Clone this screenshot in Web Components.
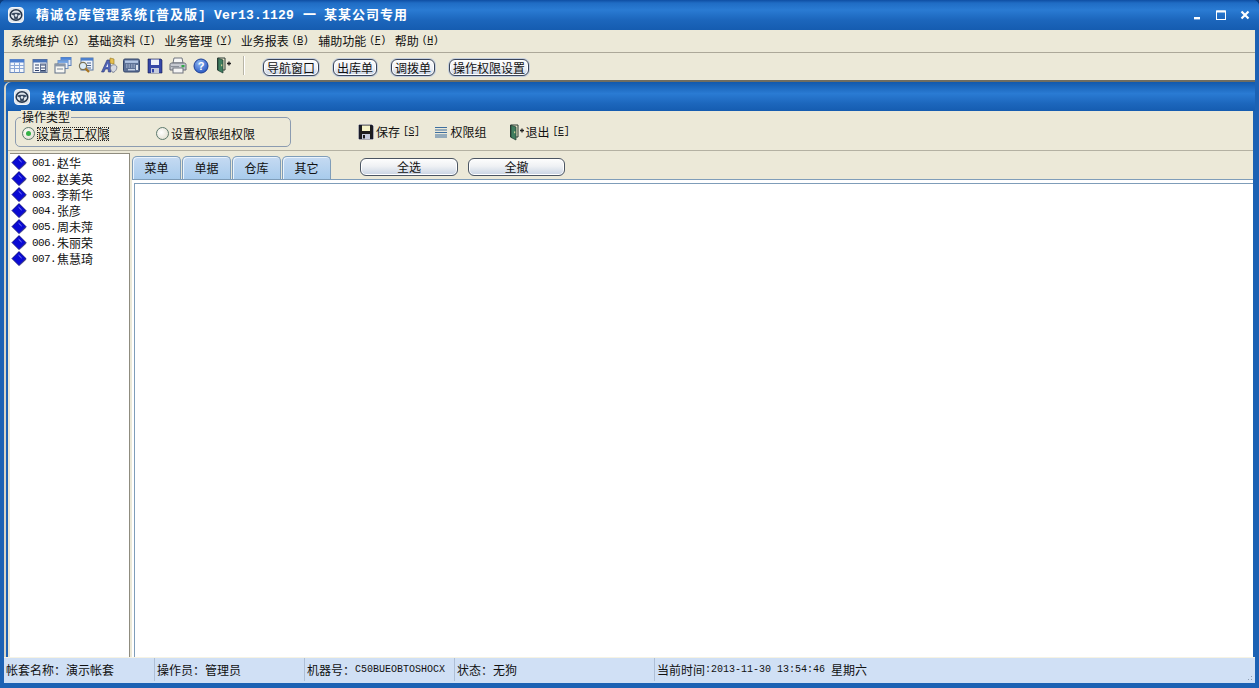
<!DOCTYPE html>
<html>
<head>
<meta charset="utf-8">
<style>
html, body { margin: 0; padding: 0; width: 100%; height: 100%; overflow: hidden; background: #0b3a7a; }
body { font: 12px "Noto Sans CJK SC", "Liberation Sans", sans-serif; color: #111; }
</style>
</head>
<body>
<app-window>
    <title-bar></title-bar>
    <menu-bar></menu-bar>
    <main-toolbar></main-toolbar>
    <inner-window>
        <perm-actions></perm-actions>
        <perm-body></perm-body>
    </inner-window>
    <status-bar></status-bar>
</app-window>

<script>
const MONO = `"Liberation Mono", "DejaVu Sans Mono", monospace`;
const CJK = `"Noto Sans CJK SC", "Liberation Sans", sans-serif`;

const WHEEL = `<svg width="16" height="16" viewBox="0 0 16 16">
<rect x="0.5" y="0.5" width="15" height="15" rx="3.5" fill="#dfe5ec" stroke="#f4f6f9"/>
<ellipse cx="8" cy="8" rx="5.8" ry="5.2" fill="none" stroke="#27364a" stroke-width="1.5"/>
<path d="M2.6 7 C5 5.4 11 5.4 13.4 7 L10.2 8.6 L9.6 12.6 H6.4 L5.8 8.6 Z" fill="#3a4a60"/>
<circle cx="8" cy="8.4" r="1.3" fill="#dfe5ec"/>
</svg>`;

const FLOPPY = `<svg width="16" height="16" viewBox="0 0 16 16">
<path d="M1 1H14L15 2V15H1Z" fill="#24307e" stroke="#10174a" stroke-width="0.6"/>
<rect x="4" y="1.5" width="8" height="5.5" fill="#eef1f8"/>
<rect x="4" y="10" width="8" height="5" fill="#c5cbdc"/>
<rect x="5" y="11" width="2" height="3.4" fill="#24307e"/>
</svg>`;

const DOOR = `<svg width="16" height="17" viewBox="0 0 16 17">
<path d="M1.5 1H9V13H1.5Z" fill="#e8e6c8" stroke="#2b3a34"/>
<path d="M2 1.2L7 3V16L2 13.4Z" fill="#3f7d5f" stroke="#1e3a30" stroke-width="0.7"/>
<rect x="5.2" y="7.4" width="1" height="1.8" fill="#e9e3a0"/>
<path d="M11 6.5H15M13 4.5V8.5" stroke="#222" stroke-width="1.3"/>
</svg>`;

const TOOL_ICONS = [
`<svg width="16" height="16" viewBox="0 0 16 16"><rect x="1" y="1.5" width="14" height="13" fill="#f4f7fc" stroke="#6d8cc0"/><rect x="1" y="1.5" width="14" height="3" fill="#4d7fd0"/><path d="M1 7.5H15M1 10.5H15M5.5 4.5V14.5M10.5 4.5V14.5" stroke="#8aa6d6"/></svg>`,
`<svg width="16" height="16" viewBox="0 0 16 16"><rect x="1" y="1.5" width="14" height="13" fill="#f5f7fb" stroke="#5d6f92"/><rect x="1" y="1.5" width="14" height="3" fill="#4872b8"/><path d="M3 7H7M3 10H7M3 12.5H7M9 7H13M9 10H13M9 12.5H13" stroke="#2f4068"/><rect x="8.5" y="6" width="5" height="7.4" fill="none" stroke="#5d6f92"/></svg>`,
`<svg width="18" height="17" viewBox="0 0 18 17"><rect x="7" y="0.5" width="10" height="8" fill="#dfe9f8" stroke="#5a7fb8"/><rect x="7" y="0.5" width="10" height="2.4" fill="#4d86d8"/><rect x="4" y="3.5" width="10" height="8" fill="#eef3fb" stroke="#6f8fbf"/><rect x="4" y="3.5" width="10" height="2.4" fill="#6fa0e0"/><rect x="1" y="7" width="10" height="9" fill="#f7f7f2" stroke="#5e6f85"/><rect x="1" y="7" width="10" height="2.4" fill="#8a97a8"/><path d="M3 12H9" stroke="#7a8798"/></svg>`,
`<svg width="17" height="17" viewBox="0 0 17 17"><rect x="4" y="1" width="12" height="12" fill="#eef3fa" stroke="#58769f"/><rect x="4" y="1" width="12" height="2.6" fill="#4d80cc"/><path d="M10 6H14M10 8.5H14M10 11H14" stroke="#4a6590"/><circle cx="6" cy="9" r="3.6" fill="#dcecf7" stroke="#7a7256" stroke-width="1.2"/><path d="M8.6 11.6L12 15" stroke="#a8741f" stroke-width="2.2"/></svg>`,
`<svg width="18" height="17" viewBox="0 0 18 17"><path d="M1.5 15L7 3H10L11 15H8.4L8.1 12H5.4L4 15Z" fill="#4f63b4" stroke="#2a3676" stroke-width="0.6"/><path d="M6.2 10H8L7.8 6.4Z" fill="#f0f2fb"/><path d="M10 1L14 2V7L10 6Z" fill="#e7c052" stroke="#94761c" stroke-width="0.6"/><path d="M10.5 10C11.5 7.5 15 7 16.5 9C17.5 11 16 14.5 13 15.5C11.5 14.5 10 12.5 10.5 10Z" fill="#d6d9e2" stroke="#666f86" stroke-width="0.8"/></svg>`,
`<svg width="17" height="15" viewBox="0 0 17 15"><rect x="0.5" y="1" width="16" height="13" rx="1.5" fill="#5d7196" stroke="#35466a"/><rect x="2" y="2.5" width="13" height="2.4" fill="#b3c6e4"/><path d="M3 7H13M3 9H13" stroke="#b9c7de" stroke-dasharray="1.5 1"/><rect x="5" y="11" width="7" height="1.4" fill="#c7d3e6"/><rect x="13" y="7" width="2" height="5" fill="#dfe6f1"/></svg>`,
FLOPPY.replace(/#24307e/g, '#3547a8'),
`<svg width="18" height="17" viewBox="0 0 18 17"><path d="M5 1H13L14 6H4Z" fill="#f7f7f7" stroke="#70757e"/><path d="M1 7.5C1 6.5 2 6 3 6H15C16 6 17 6.5 17 7.5V13H1Z" fill="#c5c8d0" stroke="#666b75"/><rect x="4" y="11" width="10" height="5" fill="#f4f4f4" stroke="#70757e"/><rect x="12.5" y="8" width="3" height="2.2" fill="#2fa846"/><path d="M2 9.5H10" stroke="#8a8f99"/></svg>`,
`<svg width="16" height="16" viewBox="0 0 16 16"><defs><radialGradient id="h" cx="40%" cy="30%" r="80%"><stop offset="0" stop-color="#8fb8f2"/><stop offset="1" stop-color="#1c4dbe"/></radialGradient></defs><circle cx="8" cy="8" r="7" fill="url(#h)" stroke="#1d3f94"/><text x="8" y="12" font-family="Liberation Sans" font-size="11" font-weight="700" text-anchor="middle" fill="#fff">?</text></svg>`,
DOOR
];

const NODE_ICON = `<svg width="16" height="16" viewBox="0 0 16 16">
<path d="M8 15.6L15.6 8.6L14 8Z" fill="#7f7f9c"/>
<path d="M8 0.6L15 7.6L8 14.6L1 7.6Z" fill="#0a0ad4" stroke="#06066e" stroke-width="0.8"/>
<path d="M7.6 4.2L10.6 7" stroke="#8f8fff"/>
</svg>`;

function define(name, html) {
    const tmpl = document.createElement('template');
    tmpl.innerHTML = html;
    customElements.define(name, class extends HTMLElement {
        constructor() {
            super();
            this.attachShadow({ mode: 'open' });
            this.shadowRoot.appendChild(tmpl.content.cloneNode(true));
        }
    });
}

define('app-window', `
<style>
:host { display: flex; flex-direction: column; width: 1259px; height: 688px; box-sizing: border-box;
    padding: 0 4px 5px; border-radius: 6px 6px 0 0;
    background: #1c62b4; }
</style>
<slot></slot>
`);

define('title-bar', `
<style>
:host { display: flex; align-items: center; height: 30px; margin: 0 -4px; padding: 0 4px; flex: none;
    border-radius: 6px 6px 0 0; color: #fff;
    background: linear-gradient(#0f4ea3 0, #1f6cc4 3px, #2a7bd3 10px, #1c66bc 20px, #155cb0 100%); }
.icon { margin: 0 0 0 4px; display: flex; }
.txt { margin-left: 12px; font: 700 13px/16px ${CJK}; letter-spacing: 1px; white-space: pre; }
.m { font-family: ${MONO}; font-size: 13px; letter-spacing: 0.2px; }
.dash { margin-left: 9px; }
.co { margin-left: 7px; }
.sys { margin-left: auto; display: flex; align-items: center; gap: 14px; padding-right: 5px; }
</style>
<span class="icon">${WHEEL}</span>
<span class="txt">精诚仓库管理系统<span class="m">[</span>普及版<span class="m">] Ver13.1129</span><span class="dash">一</span><span class="co">某某公司专用</span></span>
<span class="sys">
    <svg width="9" height="9" viewBox="0 0 9 9"><rect x="1" y="6" width="6" height="2.4" fill="#fff"/></svg>
    <svg width="10" height="10" viewBox="0 0 10 10"><rect x="0.5" y="1" width="9" height="8.5" fill="none" stroke="#fff"/><rect x="0.5" y="0.5" width="9" height="2" fill="#fff"/></svg>
    <svg width="10" height="10" viewBox="0 0 10 10"><path d="M1.5 1.5L8.5 8.5M8.5 1.5L1.5 8.5" stroke="#fff" stroke-width="2.2"/></svg>
</span>
`);

define('menu-item', `
<style>
:host { display: inline-flex; align-items: center; font: 12px/14px ${CJK}; color: #111; white-space: pre; }
.k { font: 10px/14px ${MONO}; margin-left: 3px; letter-spacing: -0.5px; }
.k u { text-underline-offset: 1px; }
</style>
<slot></slot><span class="k">(<u></u>)</span>
`);

define('menu-bar', `
<style>
:host { display: flex; align-items: center; gap: 8px; height: 22px; flex: none; padding: 0 0 0 7px; box-sizing: content-box;
    background: #ece9d8; border-bottom: 1px solid #aca899; }
</style>
<menu-item key="X">系统维护</menu-item>
<menu-item key="T" style="margin-left:1px">基础资料</menu-item>
<menu-item key="Y" style="margin-left:1px">业务管理</menu-item>
<menu-item key="B" style="margin-left:1px">业务报表</menu-item>
<menu-item key="F" style="margin-left:2px">辅助功能</menu-item>
<menu-item key="H" style="margin-left:1px">帮助</menu-item>
`);

define('pill-button', `
<style>
:host { display: inline-flex; align-items: center; justify-content: center; box-sizing: border-box; height: 17px;
    padding: 0 2px; border: 1px solid #39445a; border-radius: 6px; font: 12px/14px ${CJK}; color: #111; white-space: nowrap;
    background: linear-gradient(#fdfdfd, #eef0f5 55%, #c6d2e4); box-shadow: inset 0 0 0 1px #fff, 0 0 0 1px #c3cedd; }
</style>
<slot></slot>
`);

define('main-toolbar', `
<style>
:host { display: flex; align-items: center; height: 29px; flex: none; background: #ece9d8; padding: 0 0 2px 1px; box-sizing: border-box;
    border-bottom: 2px solid #6f6d62; }
.icons { display: flex; align-items: center; }
.icons span { width: 23px; height: 18px; display: flex; align-items: center; justify-content: center; }
.sep { width: 1px; height: 19px; background: #b8b5a6; margin: 0 19px 0 8px; box-shadow: 1px 0 0 #fff; }
pill-button { margin-top: 4px; }
pill-button + pill-button { margin-left: 14px; }
</style>
<div class="icons">${TOOL_ICONS.map(i => `<span>${i}</span>`).join('')}</div>
<div class="sep"></div>
<pill-button style="width:56px">导航窗口</pill-button>
<pill-button style="width:44px">出库单</pill-button>
<pill-button style="width:44px">调拨单</pill-button>
<pill-button style="width:80px">操作权限设置</pill-button>
`);

define('inner-window', `
<style>
:host { display: flex; flex-direction: column; flex: 1; min-height: 0; margin: 0 0 0 2px; border-radius: 6px 0 0 0;
    background: #1c62b4; padding: 0 2px 0 2px; box-sizing: border-box; box-shadow: -2px 0 0 #d8d5c6; }
.cap { display: flex; align-items: center; height: 29px; flex: none; margin: 0 -2px; padding-left: 8px; color: #fff; border-radius: 6px 0 0 0;
    font: 700 13px/14px ${CJK}; letter-spacing: 1px;
    background: linear-gradient(#1259ad, #2a7bd3 40%, #1c66bc 75%, #155cb0); }
.cap span { display: flex; margin-right: 12px; }
.client { flex: 1; min-height: 0; display: flex; flex-direction: column; background: #ece9d8; }
</style>
<div class="cap"><span>${WHEEL}</span>操作权限设置</div>
<div class="client"><slot></slot></div>
`);

define('radio-option', `
<style>
:host { display: inline-flex; align-items: center; font: 12px/14px ${CJK}; color: #111; white-space: nowrap; }
.r { width: 11px; height: 11px; border-radius: 50%; border: 1px solid #5d7a6e; margin-right: 2px;
    background: radial-gradient(circle at 40% 40%, #fff, #dcd9c8); display: flex; align-items: center; justify-content: center; }
:host([checked]) .d { width: 5px; height: 5px; border-radius: 50%; background: #35b246; }
:host([checked]) .t { outline: 1px dotted #222; outline-offset: -1px; }
</style>
<span class="r"><span class="d"></span></span><span class="t"><slot></slot></span>
`);

define('action-item', `
<style>
:host { display: inline-flex; align-items: center; gap: 1px; font: 12px/14px ${CJK}; color: #111; white-space: nowrap; }
</style>
<slot name="icon"></slot><slot></slot>
`);

define('perm-actions', `
<style>
:host { display: flex; align-items: flex-start; height: 40px; flex: none; box-sizing: border-box; border-bottom: 1px solid #b4b1a2; }
fieldset { box-sizing: border-box; position: relative; width: 276px; height: 30px; margin: 6px 0 0 7px; padding: 0; border: 1px solid #8b9bb0; border-radius: 5px;
    display: flex; align-items: center; }
legend { position: absolute; top: -8px; left: 5px; padding: 0 1px; background: #ece9d8; font: 12px/13px ${CJK}; color: #111; }
.opts { display: flex; margin: 3px 0 0 6px; }
.acts { display: flex; align-items: center; height: 14px; margin: 14px 0 0 67px; }
.k { font: 10px/14px ${MONO}; margin-left: 2px; letter-spacing: -0.5px; }
u { text-underline-offset: 1px; }
</style>
<fieldset>
    <legend>操作类型</legend>
    <div class="opts">
        <radio-option checked>设置员工权限</radio-option>
        <radio-option style="margin-left:47px">设置权限组权限</radio-option>
    </div>
</fieldset>
<div class="acts">
    <action-item><span slot="icon" style="display:flex;margin-right:1px">${FLOPPY.replace(/#24307e/g,'#1d1d1d').replace('#eef1f8','#f5f3c8')}</span>保存<span class="k">[<u>S</u>]</span></action-item>
    <action-item style="margin-left:14px"><svg slot="icon" width="14" height="12" viewBox="0 0 14 12" style="margin-right:2px"><path d="M1 1.5H13M1 4H13M1 6.5H13M1 9H13M1 11H13" stroke="#3e6f9f"/></svg>权限组</action-item>
    <action-item style="margin-left:22px"><span slot="icon" style="display:flex">${DOOR}</span>退出<span class="k">[<u>E</u>]</span></action-item>
</div>
`);

define('tree-item', `
<style>
:host { display: flex; align-items: center; height: 16px; font: 12px/16px ${CJK}; color: #111; white-space: pre; }
.i { display: flex; width: 16px; margin-right: 5px; flex: none; }
.n { font: 11px/16px ${MONO}; letter-spacing: -0.6px; margin-right: 1px; }
</style>
<span class="i">${NODE_ICON}</span><span class="n"></span><slot></slot>
`);

define('tree-list', `
<style>
:host { display: block; width: 120px; flex: none; box-sizing: border-box; background: #fff; padding: 1px 0 0 1px; margin-left: 2px;
    border-top: 1px solid #8f8c7f; border-right: 1px solid #8f8c7f; overflow: hidden; }
</style>
<slot></slot>
`);

define('tab-item', `
<style>
:host { display: flex; align-items: center; justify-content: center; box-sizing: border-box; width: 49px; height: 23px; margin-right: 1px;
    border: 1px solid #7f9db9; border-bottom: none; border-radius: 5px 5px 0 0; font: 12px/14px ${CJK}; color: #111;
    background: linear-gradient(#c5daf2, #a8cbec); box-shadow: inset 1px 1px 0 #eaf3fc; }
</style>
<slot></slot>
`);

define('flat-button', `
<style>
:host { display: flex; align-items: center; justify-content: center; box-sizing: border-box; height: 18px; border: 1px solid #4b5563; border-radius: 6px;
    font: 12px/14px ${CJK}; color: #111; background: linear-gradient(#fdfdfd 0, #eff1f4 45%, #c8d3e3 100%); box-shadow: inset 0 0 0 1px #fff; }
</style>
<slot></slot>
`);

define('perm-body', `
<style>
:host { display: flex; flex: 1; min-height: 0; padding-top: 2px; }
.main { flex: 1; min-width: 0; display: flex; flex-direction: column; margin-left: 2px; }
.top { display: flex; align-items: flex-start; height: 26px; flex: none; padding-top: 3px; box-sizing: border-box; }
.btns { display: flex; gap: 10px; margin: 2px 0 0 28px; }
.page { flex: 1; min-height: 0; background: #fff; border-top: 1px solid #7f9db9; padding: 3px 0 0 2px; box-sizing: border-box; }
.sheet { height: 100%; box-sizing: border-box; border: 1px solid #7f9db9; border-right: none; border-bottom: none; background: #fff; }
</style>
<tree-list>
    <tree-item code="001.">赵华</tree-item>
    <tree-item code="002.">赵美英</tree-item>
    <tree-item code="003.">李新华</tree-item>
    <tree-item code="004.">张彦</tree-item>
    <tree-item code="005.">周未萍</tree-item>
    <tree-item code="006.">朱丽荣</tree-item>
    <tree-item code="007.">焦慧琦</tree-item>
</tree-list>
<div class="main">
    <div class="top">
        <tab-item>菜单</tab-item>
        <tab-item>单据</tab-item>
        <tab-item>仓库</tab-item>
        <tab-item>其它</tab-item>
        <div class="btns">
            <flat-button style="width:98px">全选</flat-button>
            <flat-button style="width:97px">全撤</flat-button>
        </div>
    </div>
    <div class="page"><div class="sheet"></div></div>
</div>
`);

define('status-cell', `
<style>
:host { display: flex; align-items: center; box-sizing: border-box; padding-left: 3px; height: 100%; white-space: pre;
    font: 12px/14px ${CJK}; color: #111; box-shadow: inset 1px 0 0 #aebfd6; }
</style>
<slot></slot>
`);

define('status-bar', `
<style>
:host { display: flex; align-items: center; position: relative; height: 26px; flex: none; padding-bottom: 2px; background: #d0e0f5; border-top: 1px solid #f6f3e4; box-sizing: border-box; }
.m { font: 10px/14px ${MONO}; }
status-cell { flex: none; }
.grip { position: absolute; right: 1px; bottom: 1px; width: 10px; height: 10px;
    background: radial-gradient(circle, #8c9cb0 0 1px, transparent 1px) 0 0/3px 3px;
    clip-path: polygon(100% 0, 100% 100%, 0 100%); }
</style>
<status-cell style="width:150px;box-shadow:none;padding-left:2px">帐套名称：演示帐套</status-cell>
<status-cell style="width:150px">操作员：管理员</status-cell>
<status-cell style="width:150px">机器号：<span class="m">C50BUEOBTOSHOCX</span></status-cell>
<status-cell style="width:200px">状态：无狗</status-cell>
<status-cell style="width:400px">当前时间<span class="m">:2013-11-30 13:54:46 </span>星期六</status-cell>
<div class="grip"></div>
`);

// fill in the attribute-driven bits after definition
function fillKeys(root) {
    root.querySelectorAll('menu-item').forEach(m => {
        m.shadowRoot.querySelector('u').textContent = m.getAttribute('key');
    });
    root.querySelectorAll('tree-item').forEach(t => {
        t.shadowRoot.querySelector('.n').textContent = t.getAttribute('code');
    });
}
fillKeys(document.querySelector('menu-bar').shadowRoot);
fillKeys(document.querySelector('perm-body').shadowRoot);
</script>
</body>
</html>
